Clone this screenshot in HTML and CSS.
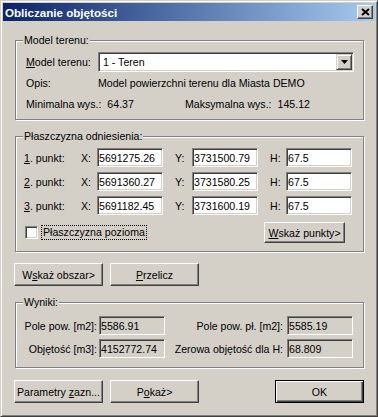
FILE: index.html
```html
<!DOCTYPE html>
<html lang="pl">
<head>
    <meta charset="UTF-8">
    <meta name="viewport" content="width=device-width, initial-scale=1.0">
    <title>Obliczanie objętości</title>
    <link rel="stylesheet" href="styles.css">
</head>
<body>

<div class="window">
    <!-- Pasek tytułu -->
    <div class="titlebar">
        <span class="title">Obliczanie objętości</span>
        <button class="close-btn" type="button">
            <svg width="9" height="8" viewBox="0 0 9 8">
                <path d="M1 1L8 7M8 1L1 7" stroke="#000" stroke-width="2" fill="none"/>
            </svg>
        </button>
    </div>

    <div class="dialog">
        <!-- Model terenu -->
        <div class="group group-model">
            <span class="group-title">Model terenu:</span>
            <div class="row combo-row">
                <label class="field-label"><u>M</u>odel terenu:</label>
                <div class="combo">
                    <span class="combo-value">1 - Teren</span>
                    <span class="combo-btn">
                        <svg width="7" height="4" viewBox="0 0 7 4"><polygon points="0,0 7,0 3.5,4" fill="#000"/></svg>
                    </span>
                </div>
            </div>
            <div class="row info-row">
                <span class="field-label">Opis:</span>
                <span>Model powierzchni terenu dla Miasta DEMO</span>
            </div>
            <div class="row info-row">
                <span class="half">Minimalna wys.:<span class="val">64.37</span></span>
                <span>Maksymalna wys.:<span class="val">145.12</span></span>
            </div>
        </div>

        <!-- Płaszczyzna odniesienia -->
        <div class="group group-plane">
            <span class="group-title">Płaszczyzna odniesienia:</span>
            <div class="points">
                <span class="pt-label"><u>1</u>. punkt:</span>
                <span class="axis">X:</span>
                <input class="edit" type="text" value="5691275.26">
                <span class="axis spaced">Y:</span>
                <input class="edit" type="text" value="3731500.79">
                <span class="axis spaced">H:</span>
                <input class="edit" type="text" value="67.5">

                <span class="pt-label"><u>2</u>. punkt:</span>
                <span class="axis">X:</span>
                <input class="edit" type="text" value="5691360.27">
                <span class="axis spaced">Y:</span>
                <input class="edit" type="text" value="3731580.25">
                <span class="axis spaced">H:</span>
                <input class="edit" type="text" value="67.5">

                <span class="pt-label"><u>3</u>. punkt:</span>
                <span class="axis">X:</span>
                <input class="edit" type="text" value="5691182.45">
                <span class="axis spaced">Y:</span>
                <input class="edit" type="text" value="3731600.19">
                <span class="axis spaced">H:</span>
                <input class="edit" type="text" value="67.5">
            </div>
            <div class="check-row">
                <label class="check">
                    <input type="checkbox">
                    <span class="check-text">Płaszczyzna pozioma</span>
                </label>
                <button class="btn btn-points" type="button"><u>W</u>skaż punkty&gt;</button>
            </div>
        </div>

        <div class="btn-row">
            <button class="btn" type="button">W<u>s</u>każ obszar&gt;</button>
            <button class="btn" type="button"><u>P</u>rzelicz</button>
        </div>

        <!-- Wyniki -->
        <div class="group group-results">
            <span class="group-title">Wyniki:</span>
            <div class="results">
                <span class="res-label">Pole pow. [m2]:</span>
                <input class="edit readonly" type="text" value="5586.91" readonly>
                <span class="res-label wide">Pole pow. pł. [m2]:</span>
                <input class="edit readonly" type="text" value="5585.19" readonly>

                <span class="res-label">Objętość [m3]:</span>
                <input class="edit readonly" type="text" value="4152772.74" readonly>
                <span class="res-label wide">Zerowa objętość dla H:</span>
                <input class="edit readonly" type="text" value="68.809" readonly>
            </div>
        </div>

        <div class="btn-row bottom-row">
            <button class="btn" type="button">Parametry <u>z</u>azn...</button>
            <button class="btn" type="button">P<u>o</u>każ&gt;</button>
            <button class="btn btn-default" type="button">OK</button>
        </div>
    </div>
</div>

</body>
</html>
```

FILE: styles.css
```css
/* Okno dialogowe w stylu Windows 2000 */
* {
    margin: 0;
    padding: 0;
    box-sizing: border-box;
}

body {
    font-family: 'Liberation Sans', Arial, sans-serif;
    font-size: 10.6px;
    color: #000;
    background-color: #d4d0c8;
}

u {
    text-decoration: underline;
    text-underline-offset: 1px;
}

.window {
    width: 378px;
    height: 417px;
    padding: 2px;
    background-color: #d4d0c8;
    border: 1px solid;
    border-color: #d4d0c8 #404040 #404040 #d4d0c8;
    box-shadow: inset 1px 1px 0 #fff, inset -1px -1px 0 #808080;
}

.titlebar {
    height: 18px;
    display: flex;
    align-items: center;
    justify-content: space-between;
    padding: 0 2px;
    background: linear-gradient(to right, #0a246a, #a6caf0);
}

.title {
    color: #fff;
    font-weight: bold;
    font-size: 11.6px;
}

.close-btn {
    width: 16px;
    height: 14px;
    display: flex;
    align-items: center;
    justify-content: center;
    background-color: #d4d0c8;
    border: 1px solid;
    border-color: #fff #404040 #404040 #fff;
    box-shadow: inset -1px -1px 0 #808080;
}

.dialog {
    padding: 0 11px;
}

/* Ramki grup */
.group {
    position: relative;
    margin-left: 1px;
    width: 349px;
    border: 1px solid #808080;
    box-shadow: inset 1px 1px 0 #fff, 1px 1px 0 #fff;
}

.group-title {
    position: absolute;
    top: -7px;
    left: 7px;
    padding: 0 1px;
    line-height: 13px;
    background-color: #d4d0c8;
}

.group-model {
    margin-top: 19px;
    height: 80px;
    padding: 11px 0 0 10px;
}

.row {
    display: flex;
    align-items: center;
}

.combo-row {
    height: 20px;
}

.info-row {
    height: 21px;
}

.field-label {
    width: 72px;
}

.combo {
    width: 256px;
    height: 20px;
    display: flex;
    align-items: center;
    justify-content: space-between;
    padding: 0 1px 0 4px;
    background-color: #fff;
    border: 1px solid;
    border-color: #808080 #fff #fff #808080;
    box-shadow: inset 1px 1px 0 #404040, inset -1px -1px 0 #d4d0c8;
}

.combo-btn {
    width: 16px;
    height: 16px;
    display: flex;
    align-items: center;
    justify-content: center;
    background-color: #d4d0c8;
    border: 1px solid;
    border-color: #d4d0c8 #404040 #404040 #d4d0c8;
    box-shadow: inset 1px 1px 0 #fff, inset -1px -1px 0 #808080;
}

.half {
    width: 159px;
}

.val {
    margin-left: 6px;
}

.group-plane {
    margin-top: 16px;
    height: 116px;
    padding: 11px 10px 0 8px;
}

.points {
    display: grid;
    grid-template-columns: 57px 16px 66px 29px 66px 28px 66px;
    grid-auto-rows: 19px;
    row-gap: 5px;
    align-items: center;
}

.axis.spaced {
    padding-left: 12px;
}

.edit {
    width: 66px;
    height: 19px;
    padding: 0 1px;
    font: inherit;
    color: #000;
    background-color: #fff;
    border: 1px solid;
    border-color: #808080 #fff #fff #808080;
    box-shadow: inset 1px 1px 0 #404040, inset -1px -1px 0 #d4d0c8;
    outline: none;
}

.edit.readonly {
    background-color: #d4d0c8;
}

.check-row {
    margin-top: 7px;
    height: 21px;
    display: flex;
    align-items: center;
    justify-content: space-between;
}

.check {
    display: flex;
    align-items: center;
    margin-left: 1px;
}

.check input {
    appearance: none;
    width: 13px;
    height: 13px;
    background-color: #fff;
    border: 1px solid;
    border-color: #808080 #fff #fff #808080;
    box-shadow: inset 1px 1px 0 #404040, inset -1px -1px 0 #d4d0c8;
}

.check-text {
    margin-left: 3px;
    padding: 0 1px;
    line-height: 13px;
    border: 1px dotted #000;
}

/* Przyciski */
.btn {
    width: 89px;
    height: 23px;
    font: inherit;
    color: #000;
    background-color: #d4d0c8;
    border: 1px solid;
    border-color: #fff #404040 #404040 #fff;
    box-shadow: inset -1px -1px 0 #808080;
}

.btn-points {
    width: 81px;
    height: 21px;
    margin-right: 8px;
}

.btn-default {
    margin-left: auto;
    border-color: #000;
    box-shadow: inset 1px 1px 0 #fff, inset -1px -1px 0 #404040, inset -2px -2px 0 #808080;
}

.btn-row {
    display: flex;
    gap: 7px;
    margin-top: 11px;
}

.bottom-row {
    margin-top: 12px;
}

.group-results {
    margin-top: 16px;
    height: 66px;
    padding: 13px 0 0 0;
}

.results {
    display: grid;
    grid-template-columns: 83px 66px 122px 66px;
    grid-auto-rows: 19px;
    row-gap: 4px;
    align-items: center;
}

.res-label {
    text-align: right;
    padding-right: 2px;
}

.res-label.wide {
    padding-right: 4px;
}
```
